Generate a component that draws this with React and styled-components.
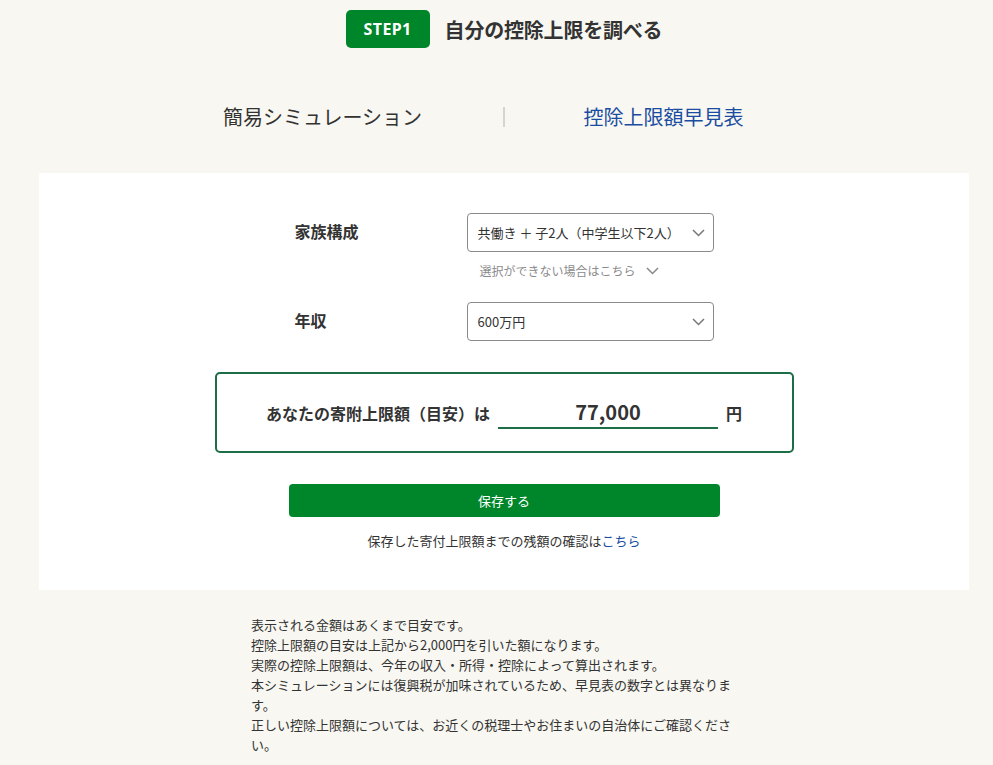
import React from "react";
import styled, { createGlobalStyle } from "styled-components";

const Global = createGlobalStyle`
  html, body { margin: 0; padding: 0; }
  body {
    background: #f8f7f1;
    font-family: "Noto Sans CJK JP", "Noto Sans", sans-serif;
    color: #333;
  }
  * { box-sizing: border-box; }
`;

const Page = styled.div`
  width: 993px;
  padding: 10px 24px 40px 39px;
`;

const Header = styled.div`
  display: flex;
  justify-content: center;
  align-items: center;
  gap: 15px;
  height: 38px;
`;

const Badge = styled.div`
  width: 84px;
  height: 38px;
  border-radius: 5px;
  background: #00862a;
  color: #fff;
  font-family: "Noto Sans", "Liberation Sans", sans-serif;
  font-weight: 700;
  font-size: 16px;
  letter-spacing: 0.4px;
  display: flex;
  align-items: center;
  justify-content: center;
`;

const Title = styled.h1`
  margin: 0;
  font-size: 20px;
  font-weight: 700;
  color: #333;
  letter-spacing: -0.2px;
`;

const Tabs = styled.div`
  margin: 49px auto 0;
  width: 680px;
  height: 40px;
  display: flex;
  align-items: center;
`;

const Tab = styled.div`
  flex: 1;
  text-align: center;
  padding-right: 22px;
  font-size: 20px;
  line-height: 40px;
  color: ${(p) => (p.$active ? "#1a4da1" : "#333")};
`;

const Divider = styled.div`
  width: 2px;
  height: 20px;
  background: #d4d4d0;
`;

const Card = styled.div`
  margin-top: 36px;
  background: #fff;
  padding: 40px 0 40px;
  display: flex;
  flex-direction: column;
  align-items: center;
`;

const Form = styled.div`
  width: 419px;
  display: flex;
  flex-direction: column;
`;

const Row = styled.div`
  display: grid;
  grid-template-columns: 172px 247px;
  align-items: center;
  margin-top: ${(p) => p.$mt || 0}px;
`;

const Label = styled.div`
  font-size: 16px;
  font-weight: 700;
  color: #333;
  padding-bottom: 4px;
`;

const Select = styled.div`
  height: 39px;
  border: 1px solid #8a8a8a;
  border-radius: 4px;
  padding: 0 8px 0 10px;
  display: flex;
  align-items: center;
  justify-content: space-between;
  font-size: 13px;
  color: #333;
  background: #fff;
`;

const Help = styled.div`
  grid-column: 2;
  margin-top: 10px;
  padding-left: 13px;
  display: flex;
  align-items: center;
  gap: 10px;
  font-size: 12px;
  line-height: 18px;
  color: #8a8a8a;
`;

const Chevron = ({ color = "#777" }) => (
  <svg width="13" height="8" viewBox="0 0 13 8" fill="none">
    <polyline points="1,1 6.5,6.5 12,1" stroke={color} strokeWidth="1.5" />
  </svg>
);

const Result = styled.div`
  margin-top: 31px;
  width: 579px;
  height: 81px;
  border: 2px solid #1b6e45;
  border-radius: 5px;
  display: flex;
  align-items: center;
  justify-content: center;
  font-size: 16px;
  font-weight: 700;
  color: #333;
`;

const Amount = styled.div`
  width: 220px;
  height: 32px;
  margin-left: 8px;
  border-bottom: 2px solid #1b6e45;
  text-align: center;
  font-size: 20px;
  line-height: 30px;
  font-weight: 700;
`;

const Yen = styled.span`
  margin-left: 8px;
`;

const SaveButton = styled.button`
  margin-top: 31px;
  width: 431px;
  height: 33px;
  border: none;
  border-radius: 4px;
  background: #00862a;
  color: #fff;
  font-family: inherit;
  font-size: 13px;
  cursor: pointer;
`;

const SubText = styled.p`
  margin: 15px 0 0;
  font-size: 13px;
  line-height: 18px;
  color: #333;
`;

const Link = styled.a`
  color: #1a4da1;
  text-decoration: none;
`;

const Notes = styled.div`
  margin: 25px 0 0 212px;
  width: 492px;
  font-size: 13px;
  line-height: 20px;
  color: #333;
`;

const Note = styled.p`
  margin: 0;
`;

export default function App() {
  return (
    <Page>
      <Global />
      <Header>
        <Badge>STEP1</Badge>
        <Title>自分の控除上限を調べる</Title>
      </Header>
      <Tabs>
        <Tab>簡易シミュレーション</Tab>
        <Divider />
        <Tab $active>控除上限額早見表</Tab>
      </Tabs>
      <Card>
        <Form>
          <Row>
            <Label>家族構成</Label>
            <Select>
              <span>共働き ＋ 子2人（中学生以下2人）</span>
              <Chevron />
            </Select>
            <Help>
              <span>選択ができない場合はこちら</span>
              <Chevron color="#888" />
            </Help>
          </Row>
          <Row $mt={22}>
            <Label>年収</Label>
            <Select>
              <span>600万円</span>
              <Chevron />
            </Select>
          </Row>
        </Form>
        <Result>
          <span>あなたの寄附上限額（目安）は</span>
          <Amount>77,000</Amount>
          <Yen>円</Yen>
        </Result>
        <SaveButton>保存する</SaveButton>
        <SubText>
          保存した寄付上限額までの残額の確認は<Link href="#">こちら</Link>
        </SubText>
      </Card>
      <Notes>
        <Note>表示される金額はあくまで目安です。</Note>
        <Note>控除上限額の目安は上記から2,000円を引いた額になります。</Note>
        <Note>実際の控除上限額は、今年の収入・所得・控除によって算出されます。</Note>
        <Note>本シミュレーションには復興税が加味されているため、早見表の数字とは異なります。</Note>
        <Note>正しい控除上限額については、お近くの税理士やお住まいの自治体にご確認ください。</Note>
      </Notes>
    </Page>
  );
}
